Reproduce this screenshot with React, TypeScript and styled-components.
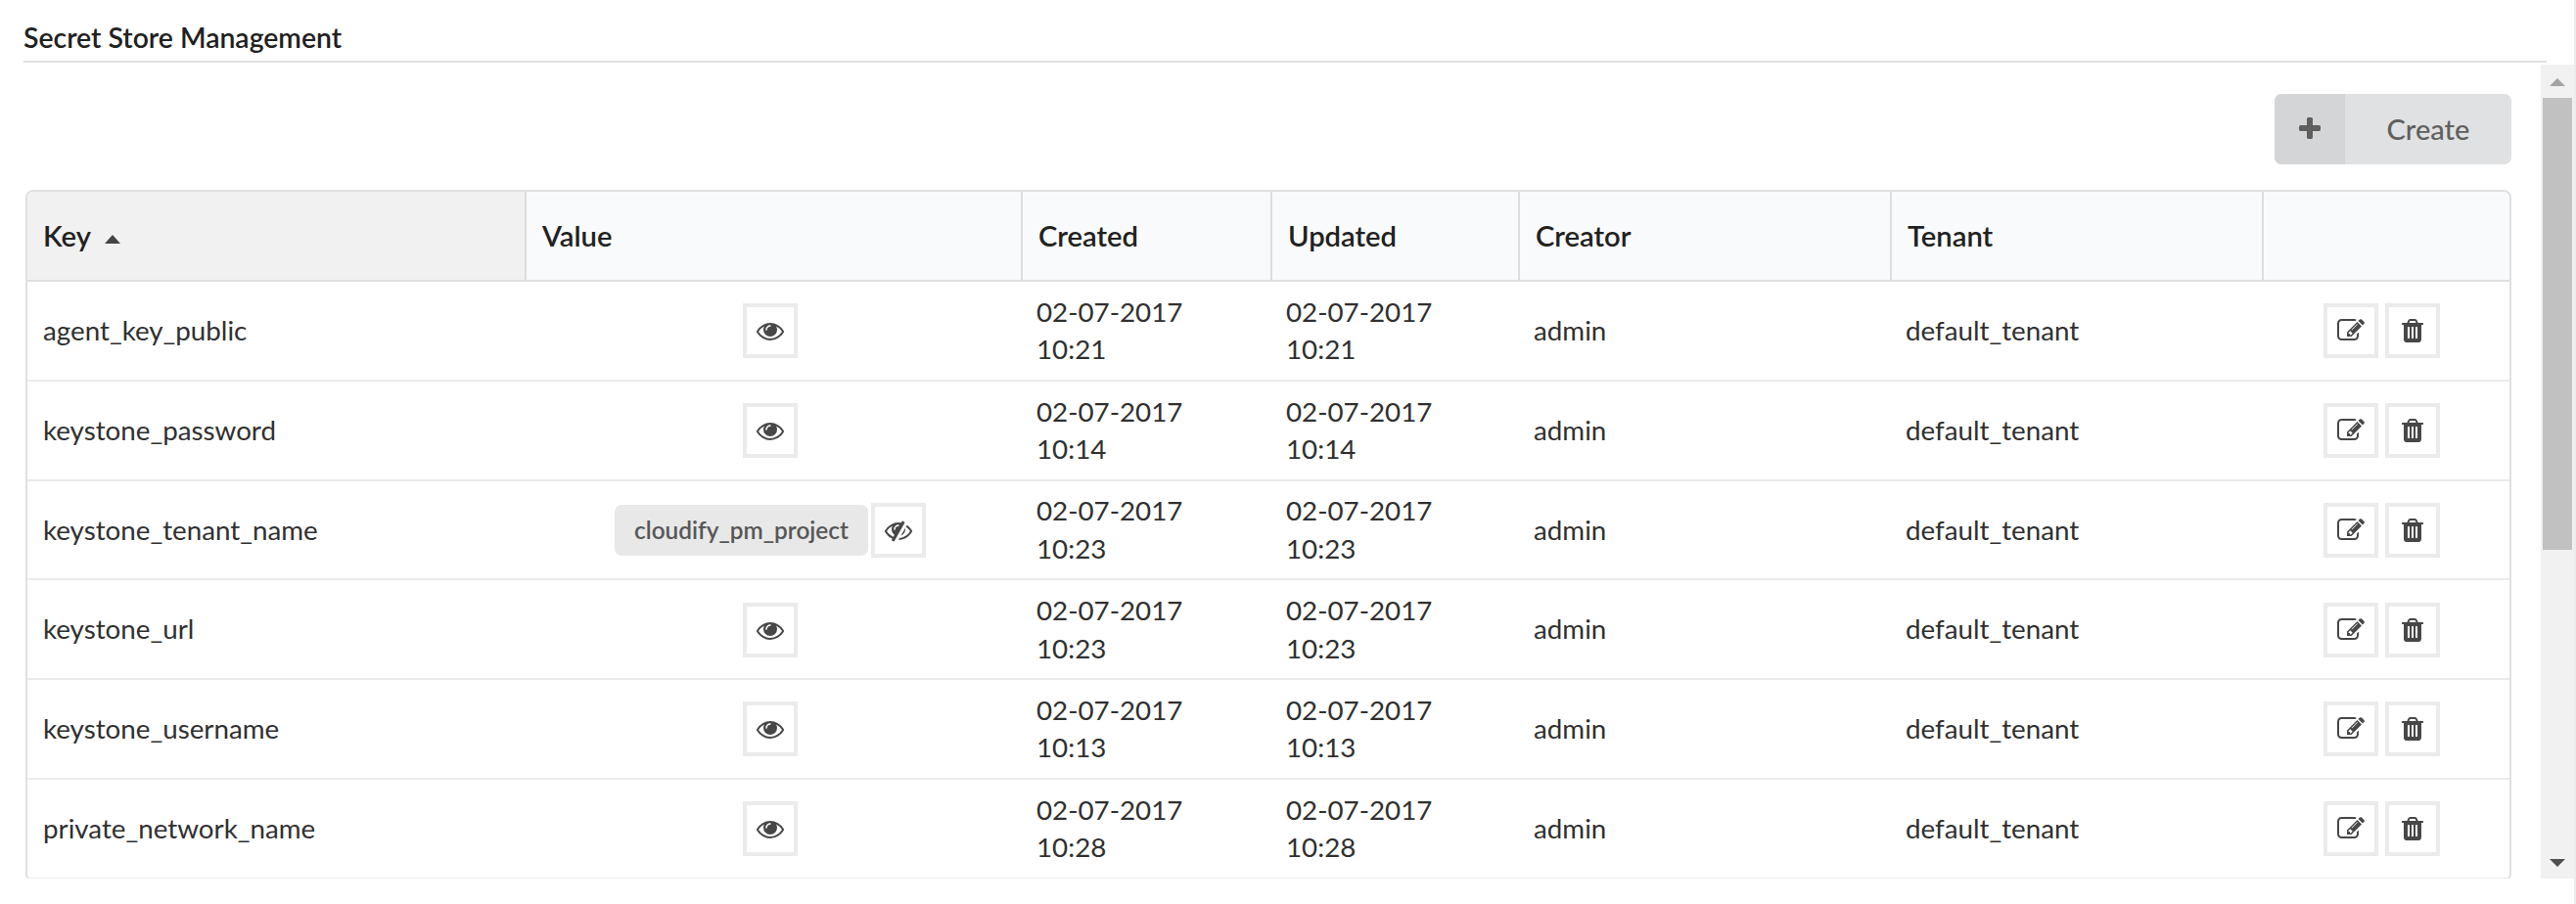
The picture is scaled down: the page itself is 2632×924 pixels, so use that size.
import styled, { createGlobalStyle } from "styled-components";

const GlobalStyle = createGlobalStyle`
  html, body {
    margin: 0;
    padding: 0;
    background: #fff;
    overflow: hidden;
  }
  body {
    font-family: Lato, "Helvetica Neue", Arial, sans-serif;
    font-size: 27.75px;
    line-height: 38.57px;
    color: rgba(0, 0, 0, 0.87);
  }
`;

const Page = styled.div`
  height: 924px;
  box-sizing: border-box;
  border-right: 2px solid #ececec;
  overflow: hidden;
`;

const Title = styled.h5`
  margin: 0 28px 0 24px;
  height: 64px;
  box-sizing: border-box;
  padding-top: 19px;
  border-bottom: 2px solid #e0e0e0;
  font-size: 28.4px;
  line-height: 38px;
  font-weight: 600;
  color: #212121;
`;

const Body = styled.div`
  display: flex;
  height: 832px;
  margin-top: 2px;
`;

const Content = styled.div`
  flex: 1;
  min-width: 0;
  padding: 30px 30px 0 26px;
  overflow: hidden;
`;

const Toolbar = styled.div`
  display: flex;
  justify-content: flex-end;
  margin-bottom: 26px;
`;

const CreateButton = styled.button`
  display: flex;
  align-items: stretch;
  width: 242px;
  height: 72px;
  padding: 0;
  border: 0;
  border-radius: 7px;
  overflow: hidden;
  background: #e0e1e2;
  color: #5f5f5f;
  font-family: inherit;
  font-size: 29px;
  font-weight: 500;
`;

const CreateIcon = styled.span`
  display: flex;
  align-items: center;
  justify-content: center;
  width: 72px;
  background: #d4d5d7;
`;

const CreateLabel = styled.span`
  flex: 1;
  align-self: center;
  text-align: center;
  margin-top: -2px;
`;

const Table = styled.table`
  width: 2540px;
  table-layout: fixed;
  border-collapse: separate;
  border-spacing: 0;
  border: 2px solid #e0e0e0;
  border-radius: 8px;
`;

const HeadCell = styled.th<{ $sorted?: boolean; $first?: boolean }>`
  height: 92px;
  box-sizing: border-box;
  padding: 0 16px;
  text-align: left;
  font-size: 29.2px;
  font-weight: 600;
  color: #212121;
  background: ${(p) => (p.$sorted ? "#f1f1f1" : "#f9fafb")};
  border-left: ${(p) => (p.$first ? "0" : "2px solid #dcdde0")};
  border-bottom: 2px solid #e0e0e0;
  &:first-child {
    border-top-left-radius: 6px;
  }
  &:last-child {
    border-top-right-radius: 6px;
  }
`;

const SortCaret = styled.span`
  display: inline-block;
  margin-left: 14px;
  vertical-align: 3px;
  border-left: 8px solid transparent;
  border-right: 8px solid transparent;
  border-bottom: 9px solid #444;
`;

const Cell = styled.td<{ $align?: "center" }>`
  padding: 11.8px 16px 10.86px;
  text-align: ${(p) => p.$align ?? "left"};
  color: #303030;
  border-bottom: 2px solid #ebebeb;
`;

const ValueRow = styled.div`
  display: flex;
  justify-content: center;
  align-items: center;
  gap: 3px;
  margin-left: -5px;
`;

const SecretPill = styled.span`
  display: inline-flex;
  align-items: center;
  height: 52px;
  box-sizing: border-box;
  padding: 0 20px;
  border-radius: 7px;
  background: #e8e8e8;
  color: #575757;
  font-size: 24.4px;
  font-weight: 600;
`;

const IconButton = styled.button`
  display: inline-flex;
  align-items: center;
  justify-content: center;
  width: 56px;
  height: 56px;
  padding: 0;
  box-sizing: border-box;
  background: #fff;
  border: 4px solid #ebebeb;
  color: #474747;
`;

const Actions = styled.div`
  display: flex;
  justify-content: center;
  gap: 7px;
  margin-left: -8px;
`;

const Scrollbar = styled.div`
  flex: none;
  width: 34px;
  display: flex;
  flex-direction: column;
  background: #f1f1f1;
`;

const ScrollArrow = styled.div<{ $down?: boolean }>`
  height: 34px;
  display: flex;
  align-items: center;
  justify-content: center;
  &::after {
    content: "";
    border-left: 8px solid transparent;
    border-right: 8px solid transparent;
    ${(p) =>
      p.$down
        ? "border-top: 8px solid #505050; margin-top: 2px;"
        : "border-bottom: 8px solid #a3a3a3; margin-top: 2px;"}
  }
`;

const ScrollThumb = styled.div`
  height: 462px;
  margin: 0 2px;
  background: #c1c1c1;
`;

const ScrollTrack = styled.div`
  flex: 1;
`;

const Icon = styled.svg`
  display: block;
  width: 28px;
  height: 28px;
  fill: currentColor;
`;

const ICONS = {
  eye: "M1664 960q-152-236-381-353 61 104 61 225 0 185-131.5 316.5t-316.5 131.5-316.5-131.5-131.5-316.5q0-121 61-225-229 117-381 353 133 205 333.5 326.5t434.5 121.5 434.5-121.5 333.5-326.5zm-720-384q0-20-14-34t-34-14q-125 0-214.5 89.5t-89.5 214.5q0 20 14 34t34 14 34-14 14-34q0-86 61-147t147-61q20 0 34-14t14-34zm848 384q0 34-20 69-140 230-376.5 368.5t-499.5 138.5-499.5-139-376.5-368q-20-35-20-69t20-69q140-229 376.5-368t499.5-139 499.5 139 376.5 368q20 35 20 69z",
  eyeSlash:
    "M555 1335l78-141q-87-63-136-159t-49-203q0-121 61-225-229 117-381 353 167 258 427 375zm389-759q0-20-14-34t-34-14q-125 0-214.5 89.5t-89.5 214.5q0 20 14 34t34 14 34-14 14-34q0-86 61-147t147-61q20 0 34-14t14-34zm363-191q0 7-1 9-106 189-316 567t-315 566l-49 89q-10 16-28 16-12 0-134-70-16-10-16-28 0-12 44-87-143-65-263.5-173t-208.5-245q-20-31-20-69t20-69q153-235 380-371t496-136q89 0 180 17l54-97q10-16 28-16 5 0 18 6t31 15.5 33 18.5 31.5 18.5 19.5 11.5q16 10 16 27zm37 447q0 139-79 253.5t-209 164.5l280-502q8 45 8 84zm448 128q0 35-20 69-39 64-109 145-150 172-347.5 267t-419.5 95l74-132q212-18 392.5-137t301.5-307q-115-179-282-294l63-112q95 64 182.5 153t144.5 184q20 34 20 69z",
  edit: "M888 1184l116-116-152-152-116 116v56h96v96h56zm440-720q-16-16-33 1l-350 350q-17 17-1 33t33-1l350-350q17-17 1-33zm80 594v190q0 119-84.5 203.5t-203.5 84.5h-832q-119 0-203.5-84.5t-84.5-203.5v-832q0-119 84.5-203.5t203.5-84.5h832q63 0 117 25 15 7 18 23 3 17-9 29l-49 49q-14 14-32 8-23-6-45-6h-832q-66 0-113 47t-47 113v832q0 66 47 113t113 47h832q66 0 113-47t47-113v-126q0-13 9-22l64-64q15-15 35-7t20 29zm-96-738l288 288-672 672h-288v-288zm444 132l-92 92-288-288 92-92q28-28 68-28t68 28l152 152q28 28 28 68t-28 68z",
  trash:
    "M704 1376v-704q0-14-9-23t-23-9h-64q-14 0-23 9t-9 23v704q0 14 9 23t23 9h64q14 0 23-9t9-23zm256 0v-704q0-14-9-23t-23-9h-64q-14 0-23 9t-9 23v704q0 14 9 23t23 9h64q14 0 23-9t9-23zm256 0v-704q0-14-9-23t-23-9h-64q-14 0-23 9t-9 23v704q0 14 9 23t23 9h64q14 0 23-9t9-23zm-544-992h448l-48-117q-7-9-17-11h-317q-10 2-17 11zm928 32v64q0 14-9 23t-23 9h-96v948q0 83-47 143.5t-113 60.5h-832q-66 0-113-58.5t-47-141.5v-952h-96q-14 0-23-9t-9-23v-64q0-14 9-23t23-9h309l70-167q15-37 54-63t79-26h320q40 0 79 26t54 63l70 167h309q14 0 23 9t9 23z",
  plus: "M1600 736v192q0 40-28 68t-68 28h-416v416q0 40-28 68t-68 28h-192q-40 0-68-28t-28-68v-416h-416q-40 0-68-28t-28-68v-192q0-40 28-68t68-28h416v-416q0-40 28-68t68-28h192q40 0 68 28t28 68v416h416q40 0 68 28t28 68z",
};

function FaIcon({ name }: { name: keyof typeof ICONS }) {
  return (
    <Icon viewBox="0 0 1792 1792">
      <path d={ICONS[name]} />
    </Icon>
  );
}

const COLUMNS = [508, 507, 255, 253, 380, 380, 253];

const SECRETS = [
  { key: "agent_key_public", time: "10:21" },
  { key: "keystone_password", time: "10:14" },
  { key: "keystone_tenant_name", time: "10:23", shown: "cloudify_pm_project" },
  { key: "keystone_url", time: "10:23" },
  { key: "keystone_username", time: "10:13" },
  { key: "private_network_name", time: "10:28" },
];

export default function App() {
  return (
    <Page>
      <GlobalStyle />
      <Title>Secret Store Management</Title>
      <Body>
        <Content>
          <Toolbar>
            <CreateButton>
              <CreateIcon>
                <FaIcon name="plus" />
              </CreateIcon>
              <CreateLabel>Create</CreateLabel>
            </CreateButton>
          </Toolbar>
          <Table>
            <colgroup>
              {COLUMNS.map((w, i) => (
                <col key={i} width={w} />
              ))}
            </colgroup>
            <thead>
              <tr>
                <HeadCell $sorted $first>
                  Key
                  <SortCaret />
                </HeadCell>
                <HeadCell>Value</HeadCell>
                <HeadCell>Created</HeadCell>
                <HeadCell>Updated</HeadCell>
                <HeadCell>Creator</HeadCell>
                <HeadCell>Tenant</HeadCell>
                <HeadCell />
              </tr>
            </thead>
            <tbody>
              {SECRETS.map((s) => (
                <tr key={s.key}>
                  <Cell>{s.key}</Cell>
                  <Cell $align="center">
                    <ValueRow>
                      {s.shown && <SecretPill>{s.shown}</SecretPill>}
                      <IconButton>
                        <FaIcon name={s.shown ? "eyeSlash" : "eye"} />
                      </IconButton>
                    </ValueRow>
                  </Cell>
                  <Cell>
                    02-07-2017
                    <br />
                    {s.time}
                  </Cell>
                  <Cell>
                    02-07-2017
                    <br />
                    {s.time}
                  </Cell>
                  <Cell>admin</Cell>
                  <Cell>default_tenant</Cell>
                  <Cell>
                    <Actions>
                      <IconButton>
                        <FaIcon name="edit" />
                      </IconButton>
                      <IconButton>
                        <FaIcon name="trash" />
                      </IconButton>
                    </Actions>
                  </Cell>
                </tr>
              ))}
            </tbody>
          </Table>
        </Content>
        <Scrollbar>
          <ScrollArrow />
          <ScrollThumb />
          <ScrollTrack />
          <ScrollArrow $down />
        </Scrollbar>
      </Body>
    </Page>
  );
}
